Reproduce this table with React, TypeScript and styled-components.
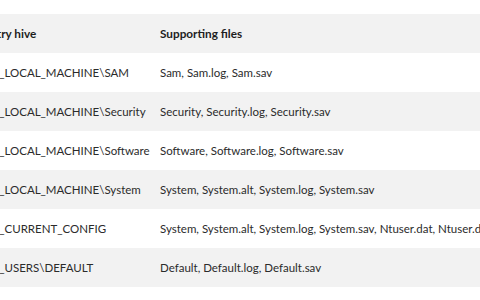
import styled, { createGlobalStyle } from 'styled-components';

const GlobalStyle = createGlobalStyle`
  html, body {
    margin: 0;
    padding: 0;
    background: #ffffff;
    overflow: hidden;
  }
`

const Page = styled.div`
  width: 480px;
  height: 300px;
  overflow: hidden;
  padding-top: 14px;
  box-sizing: border-box;
`

const Table = styled.div`
  display: grid;
  grid-template-columns: 191px 520px;
  margin-left: -31px;
  font-family: "Lato", "Open Sans", sans-serif;
  font-size: 11.5px;
  color: #2b2b2b;
`

const Row = styled.div<{ $shaded: boolean }>`
  display: contents;
  & > div {
    background: ${(p) => (p.$shaded ? '#f2f2f2' : '#ffffff')};
  }
`

const Cell = styled.div<{ $head?: boolean }>`
  height: 39px;
  display: flex;
  align-items: center;
  white-space: nowrap;
  font-size: ${(p) => (p.$head ? '11.75px' : '11.5px')};
  font-weight: ${(p) => (p.$head ? 700 : 400)};
  color: ${(p) => (p.$head ? '#1e1e1e' : '#2b2b2b')};
`

const rows = [
  ['HKEY_LOCAL_MACHINE\\SAM', 'Sam, Sam.log, Sam.sav'],
  ['HKEY_LOCAL_MACHINE\\Security', 'Security, Security.log, Security.sav'],
  ['HKEY_LOCAL_MACHINE\\Software', 'Software, Software.log, Software.sav'],
  ['HKEY_LOCAL_MACHINE\\System', 'System, System.alt, System.log, System.sav'],
  ['HKEY_CURRENT_CONFIG', 'System, System.alt, System.log, System.sav, Ntuser.dat, Ntuser.dat.log'],
  ['HKEY_USERS\\DEFAULT', 'Default, Default.log, Default.sav'],
]

const App = () => {
  return (
    <Page>
      <GlobalStyle />
      <Table>
        <Row $shaded>
          <Cell $head>Registry hive</Cell>
          <Cell $head>Supporting files</Cell>
        </Row>
        {rows.map((r, i) => (
          <Row key={r[0]} $shaded={i % 2 === 1}>
            <Cell>{r[0]}</Cell>
            <Cell>{r[1]}</Cell>
          </Row>
        ))}
      </Table>
    </Page>
  );
};

export default App;
